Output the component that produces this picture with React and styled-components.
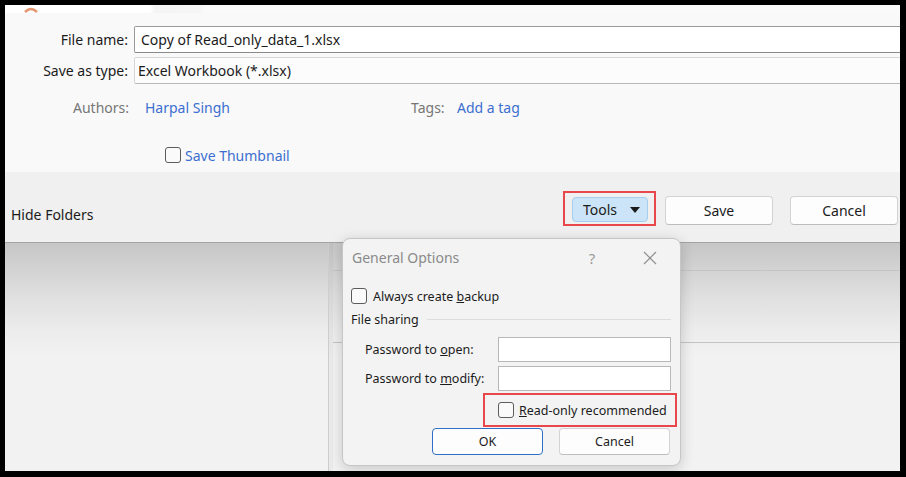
import React from 'react';
import styled, { createGlobalStyle } from 'styled-components';

const GlobalStyle = createGlobalStyle`
  html, body {
    margin: 0;
    padding: 0;
    background: #000;
  }
  body {
    font-family: 'Segoe UI', 'Noto Sans', sans-serif;
    color: #1b1b1b;
  }
`;

const Frame = styled.div`
  width: 906px;
  height: 477px;
  box-sizing: border-box;
  padding: 5px 6px 6px 5px;
  background: #000;
  overflow: hidden;
`;

const Screen = styled.div`
  position: relative;
  height: 100%;
  display: flex;
  flex-direction: column;
  overflow: hidden;
  background: #f2f2f2;
`;

const TopPanel = styled.div`
  height: 167px;
  flex: none;
  background: #f9f9f9;
  display: flex;
  flex-direction: column;
`;

const TopStrip = styled.div`
  height: 8px;
  display: flex;
  background: linear-gradient(to right, #fff 0, #fff 145px, #f4f4f4 150px, #f6f6f6 195px, #fafafa 200px);
  svg {
    margin-left: 18px;
  }
`;

const FieldRow = styled.div`
  display: flex;
  align-items: center;
  height: 27px;
  margin-top: ${p => p.$top}px;
  font-size: 14px;
`;

const FieldLabel = styled.label`
  width: 123px;
  text-align: right;
  flex: none;
`;

const FieldBox = styled.div`
  flex: 1;
  height: 100%;
  margin: 0 -14px 0 6px;
  box-sizing: border-box;
  display: flex;
  align-items: center;
  padding-left: ${p => p.$pad}px;
  background: ${p => (p.$active ? '#fff' : '#fcfcfc')};
  border: 1px solid ${p => (p.$active ? '#9a9a9a' : '#d6d6d6')};
  border-bottom-color: ${p => (p.$active ? '#8a8a8a' : '#b9b9b9')};
  border-radius: 2px;
`;

const MetaRow = styled.div`
  display: grid;
  grid-template-columns: 124px 282px 32px auto;
  align-items: center;
  height: 22px;
  margin-top: 12px;
  font-size: 14px;
`;

const MetaLabel = styled.span`
  color: #767676;
  text-align: right;
`;

const MetaLink = styled.span`
  color: #3c6fd0;
  padding-left: ${p => p.$pad}px;
`;

const ThumbRow = styled.div`
  display: flex;
  align-items: center;
  height: 20px;
  margin-top: 27px;
  padding-left: 160px;
  gap: 4px;
  font-size: 14px;
  color: #3c6fd0;
`;

const CheckBox = styled.span`
  display: inline-block;
  flex: none;
  width: ${p => p.$size}px;
  height: ${p => p.$size}px;
  box-sizing: border-box;
  border: 1px solid #5c5c5c;
  border-radius: 3px;
  background: #fafafa;
`;

const BottomBar = styled.div`
  height: 70px;
  flex: none;
  display: flex;
  padding: 0 2px 0 6px;
  background: #f0f0f0;
  border-bottom: 1px solid #a3a3a3;
`;

const HideFolders = styled.span`
  font-size: 14px;
  margin-top: 33px;
`;

const ButtonGroup = styled.div`
  margin-left: auto;
  display: flex;
  align-items: flex-start;
  padding-top: 19px;
`;

const Highlight = styled.div`
  border: 2px solid #e8474b;
  display: flex;
  box-sizing: border-box;
`;

const ToolsHighlight = styled(Highlight)`
  width: 93px;
  height: 35px;
  padding: 4px 6px 0 7px;
  margin-right: 9px;
`;

const ToolsButton = styled.div`
  width: 76px;
  height: 25px;
  box-sizing: border-box;
  display: flex;
  align-items: center;
  padding: 0 7px 0 10px;
  justify-content: space-between;
  background: #cce4f7;
  border: 1px solid #a7cdee;
  border-radius: 4px;
  font-size: 14px;
`;

const Button = styled.div`
  width: ${p => p.$w}px;
  height: ${p => p.$h}px;
  margin: ${p => p.$m || '0'};
  box-sizing: border-box;
  display: flex;
  align-items: center;
  justify-content: center;
  background: #fdfdfd;
  border: 1px solid ${p => (p.$primary ? '#2f6fc6' : '#d3d3d3')};
  border-bottom-color: ${p => (p.$primary ? '#2f6fc6' : '#bdbdbd')};
  border-radius: 4px;
  font-size: ${p => p.$fs}px;
`;

const BackArea = styled.div`
  flex: 1;
  display: flex;
  background: linear-gradient(to bottom, #c6c6c6 0%, #dedede 22%, #ececec 38%, #f2f2f2 50%);
`;

const LeftPane = styled.div`
  width: 323px;
  flex: none;
  border-right: 1px solid #cdcdcd;
`;

const RightPane = styled.div`
  flex: 1;
  display: flex;
  flex-direction: column;
  border-left: 4px solid rgba(0, 0, 0, 0.03);
`;

const PaneRow = styled.div`
  height: ${p => p.$h}px;
  flex: none;
  border-bottom: 1px solid #c4c4c4;
`;

const Dialog = styled.div`
  position: absolute;
  left: 337px;
  top: 233px;
  width: 339px;
  height: 228px;
  box-sizing: border-box;
  display: flex;
  flex-direction: column;
  background: #f3f3f3;
  border: 1px solid #c6c6c6;
  border-radius: 8px;
  box-shadow: 0 3px 14px rgba(0, 0, 0, 0.18);
`;

const TitleBar = styled.div`
  height: 37px;
  flex: none;
  display: flex;
  align-items: center;
  padding: 0 7px 0 9px;
  color: #8a8a8a;
  font-size: 14px;
`;

const TitleButton = styled.div`
  width: 46px;
  height: 30px;
  display: flex;
  align-items: center;
  justify-content: center;
  margin-left: ${p => p.$ml};
  color: #9a9a9a;
  font-size: 15px;
`;

const DialogBody = styled.div`
  flex: 1;
  display: flex;
  flex-direction: column;
  padding: 0 9px 0 8px;
  font-size: 12.5px;
`;

const CheckRow = styled.div`
  display: flex;
  align-items: center;
  gap: 6px;
  height: 18px;
  margin-top: 11px;
`;

const GroupHeader = styled.div`
  display: flex;
  align-items: center;
  height: 18px;
  margin-top: 5px;
  &::after {
    content: '';
    flex: 1;
    height: 1px;
    margin-left: 8px;
    background: #dcdcdc;
  }
`;

const PasswordRow = styled.div`
  display: flex;
  align-items: center;
  height: 25px;
  margin-top: ${p => p.$top}px;
  padding-left: 14px;
`;

const PasswordLabel = styled.span`
  width: 133px;
  flex: none;
`;

const PasswordInput = styled.div`
  flex: 1;
  height: 100%;
  box-sizing: border-box;
  background: #fff;
  border: 1px solid #b8b8b8;
`;

const ReadOnlyBox = styled(Highlight)`
  align-self: flex-end;
  width: 194px;
  height: 34px;
  margin: 2px -6px 0 0;
  align-items: center;
  padding-left: 13px;
  gap: 5px;
`;

const DialogButtons = styled.div`
  display: flex;
  justify-content: flex-end;
  gap: 16px;
  margin-top: 1px;
`;

const OrangeMark = () => (
  <svg width="16" height="8" viewBox="0 0 16 8">
    <path d="M2 7 Q8 1 14 7" fill="none" stroke="#e59670" strokeWidth="2.5" />
  </svg>
);

const CaretDown = () => (
  <svg width="10" height="6" viewBox="0 0 10 6">
    <path d="M0 0 H10 L5 6 Z" fill="#1b1b1b" />
  </svg>
);

const CloseIcon = () => (
  <svg width="14" height="14" viewBox="0 0 14 14">
    <path d="M1 1 L13 13 M13 1 L1 13" stroke="#8f8f8f" strokeWidth="1.2" />
  </svg>
);

export default function App() {
  return (
    <>
      <GlobalStyle />
      <Frame>
        <Screen>
          <TopPanel>
            <TopStrip>
              <OrangeMark />
            </TopStrip>
            <FieldRow $top={13}>
              <FieldLabel>File name:</FieldLabel>
              <FieldBox $active $pad={6}>Copy of Read_only_data_1.xlsx</FieldBox>
            </FieldRow>
            <FieldRow $top={4}>
              <FieldLabel>Save as type:</FieldLabel>
              <FieldBox $pad={3}>Excel Workbook (*.xlsx)</FieldBox>
            </FieldRow>
            <MetaRow>
              <MetaLabel>Authors:</MetaLabel>
              <MetaLink $pad={16}>Harpal Singh</MetaLink>
              <MetaLabel>Tags:</MetaLabel>
              <MetaLink $pad={14}>Add a tag</MetaLink>
            </MetaRow>
            <ThumbRow>
              <CheckBox $size={16} />
              Save Thumbnail
            </ThumbRow>
          </TopPanel>

          <BottomBar>
            <HideFolders>Hide Folders</HideFolders>
            <ButtonGroup>
              <ToolsHighlight>
                <ToolsButton>
                  Tools
                  <CaretDown />
                </ToolsButton>
              </ToolsHighlight>
              <Button $w={108} $h={29} $fs={14} $m="5px 17px 0 0">Save</Button>
              <Button $w={108} $h={29} $fs={14} $m="5px 0 0 0">Cancel</Button>
            </ButtonGroup>
          </BottomBar>

          <BackArea>
            <LeftPane />
            <RightPane>
              <PaneRow $h={27} />
              <PaneRow $h={71} />
            </RightPane>
          </BackArea>

          <Dialog>
            <TitleBar>
              General Options
              <TitleButton $ml="auto">?</TitleButton>
              <TitleButton $ml="12px">
                <CloseIcon />
              </TitleButton>
            </TitleBar>
            <DialogBody>
              <CheckRow>
                <CheckBox $size={16} />
                <span>
                  Always create <u>b</u>ackup
                </span>
              </CheckRow>
              <GroupHeader>File sharing</GroupHeader>
              <PasswordRow $top={9}>
                <PasswordLabel>
                  Password to <u>o</u>pen:
                </PasswordLabel>
                <PasswordInput />
              </PasswordRow>
              <PasswordRow $top={4}>
                <PasswordLabel>
                  Password to <u>m</u>odify:
                </PasswordLabel>
                <PasswordInput />
              </PasswordRow>
              <ReadOnlyBox>
                <CheckBox $size={16} />
                <span>
                  <u>R</u>ead-only recommended
                </span>
              </ReadOnlyBox>
              <DialogButtons>
                <Button $w={111} $h={27} $fs={12.5} $primary>OK</Button>
                <Button $w={111} $h={27} $fs={12.5} $m="0 1px 0 0">Cancel</Button>
              </DialogButtons>
            </DialogBody>
          </Dialog>
        </Screen>
      </Frame>
    </>
  );
}
